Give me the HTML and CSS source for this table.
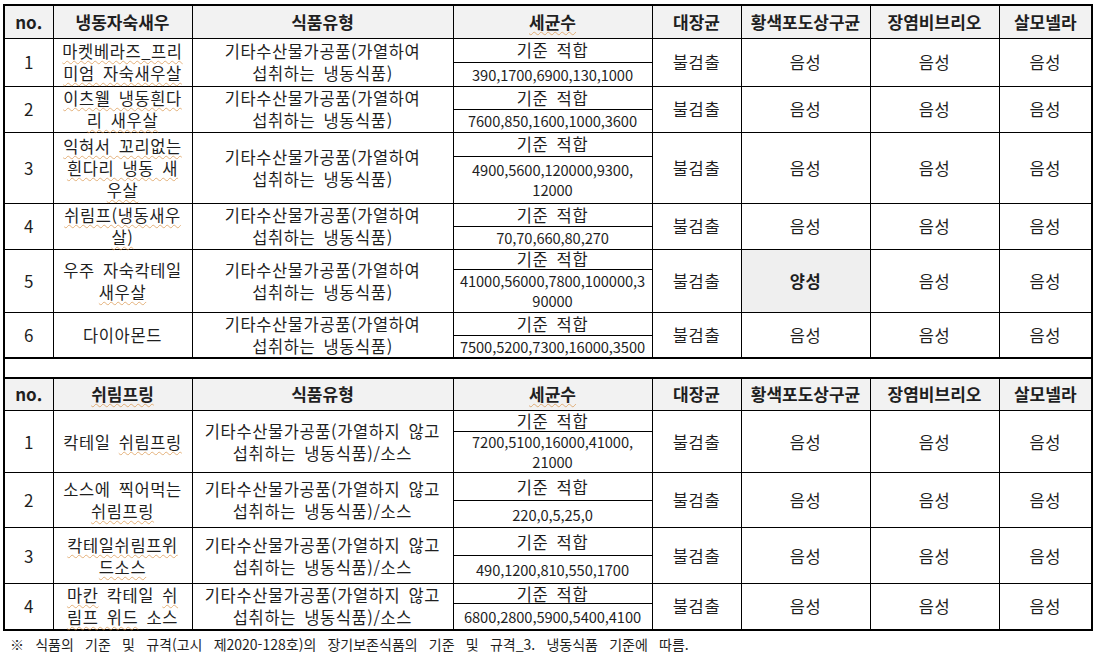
FILE: index.html
```html
<!DOCTYPE html>
<html lang="ko">
<head>
<meta charset="utf-8">
<title>냉동식품 검사 결과</title>
<link rel="stylesheet" href="styles.css">
</head>
<body>
<table class="grid">
  <colgroup>
    <col class="c-no"><col class="c-name"><col class="c-type"><col class="c-bac">
    <col class="c-ecoli"><col class="c-staph"><col class="c-vib"><col class="c-sal">
  </colgroup>
  <tr class="head">
    <th>no.</th><th>냉동자숙새우</th><th>식품유형</th><th><span class="sp">세균수</span></th>
    <th>대장균</th><th>황색포도상구균</th><th>장염비브리오</th><th>살모넬라</th>
  </tr>

  <tr class="h24">
    <td rowspan="2" class="no">1</td>
    <td rowspan="2"><span class="sp">마켓베라즈_프리</span><br><span class="sp">미엄 자숙새우살</span></td>
    <td rowspan="2">기타수산물가공품(가열하여<br>섭취하는 냉동식품)</td>
    <td class="sub">기준 적합</td>
    <td rowspan="2">불검출</td><td rowspan="2">음성</td><td rowspan="2">음성</td><td rowspan="2">음성</td>
  </tr>
  <tr class="h24"><td class="sub num">390,1700,6900,130,1000</td></tr>

  <tr class="h23">
    <td rowspan="2" class="no">2</td>
    <td rowspan="2"><span class="sp">이츠웰 냉동흰다</span><br><span class="sp">리 새우살</span></td>
    <td rowspan="2">기타수산물가공품(가열하여<br>섭취하는 냉동식품)</td>
    <td class="sub">기준 적합</td>
    <td rowspan="2">불검출</td><td rowspan="2">음성</td><td rowspan="2">음성</td><td rowspan="2">음성</td>
  </tr>
  <tr class="h23"><td class="sub num">7600,850,1600,1000,3600</td></tr>

  <tr class="h24">
    <td rowspan="2" class="no">3</td>
    <td rowspan="2"><span class="sp">익혀서 꼬리없는</span><br><span class="sp">흰다리 냉동 새</span><br><span class="sp">우살</span></td>
    <td rowspan="2">기타수산물가공품(가열하여<br>섭취하는 냉동식품)</td>
    <td class="sub">기준 적합</td>
    <td rowspan="2">불검출</td><td rowspan="2">음성</td><td rowspan="2">음성</td><td rowspan="2">음성</td>
  </tr>
  <tr class="h47"><td class="sub num num2">4900,5600,120000,9300,<br>12000</td></tr>

  <tr class="h23">
    <td rowspan="2" class="no">4</td>
    <td rowspan="2"><span class="sp">쉬림프(냉동새우</span><br><span class="sp">살)</span></td>
    <td rowspan="2">기타수산물가공품(가열하여<br>섭취하는 냉동식품)</td>
    <td class="sub">기준 적합</td>
    <td rowspan="2">불검출</td><td rowspan="2">음성</td><td rowspan="2">음성</td><td rowspan="2">음성</td>
  </tr>
  <tr class="h23"><td class="sub num">70,70,660,80,270</td></tr>

  <tr class="h20">
    <td rowspan="2" class="no">5</td>
    <td rowspan="2">우주 자숙칵테일<br><span class="sp">새우살</span></td>
    <td rowspan="2">기타수산물가공품(가열하여<br>섭취하는 냉동식품)</td>
    <td class="sub">기준 적합</td>
    <td rowspan="2">불검출</td><td rowspan="2" class="pos">양성</td><td rowspan="2">음성</td><td rowspan="2">음성</td>
  </tr>
  <tr class="h43"><td class="sub num num2">41000,56000,7800,100000,3<br>90000</td></tr>

  <tr class="h23">
    <td rowspan="2" class="no">6</td>
    <td rowspan="2">다이아몬드</td>
    <td rowspan="2">기타수산물가공품(가열하여<br>섭취하는 냉동식품)</td>
    <td class="sub">기준 적합</td>
    <td rowspan="2">불검출</td><td rowspan="2">음성</td><td rowspan="2">음성</td><td rowspan="2">음성</td>
  </tr>
  <tr class="h22"><td class="sub num">7500,5200,7300,16000,3500</td></tr>

  <tr class="gap"><td colspan="8"></td></tr>

  <tr class="head head2">
    <th>no.</th><th><span class="sp">쉬림프링</span></th><th>식품유형</th><th><span class="sp">세균수</span></th>
    <th>대장균</th><th>황색포도상구균</th><th>장염비브리오</th><th>살모넬라</th>
  </tr>

  <tr class="h21">
    <td rowspan="2" class="no">1</td>
    <td rowspan="2">칵테일 <span class="sp">쉬림프링</span></td>
    <td rowspan="2">기타수산물가공품(가열하지 않고<br>섭취하는 냉동식품)/소스</td>
    <td class="sub">기준 적합</td>
    <td rowspan="2">불검출</td><td rowspan="2">음성</td><td rowspan="2">음성</td><td rowspan="2">음성</td>
  </tr>
  <tr class="h41"><td class="sub num num2">7200,5100,16000,41000,<br>21000</td></tr>

  <tr class="h28">
    <td rowspan="2" class="no">2</td>
    <td rowspan="2">소스에 찍어먹는<br><span class="sp">쉬림프링</span></td>
    <td rowspan="2">기타수산물가공품(가열하지 않고<br>섭취하는 냉동식품)/소스</td>
    <td class="sub">기준 적합</td>
    <td rowspan="2">불검출</td><td rowspan="2">음성</td><td rowspan="2">음성</td><td rowspan="2">음성</td>
  </tr>
  <tr class="h27"><td class="sub num">220,0,5,25,0</td></tr>

  <tr class="h28">
    <td rowspan="2" class="no">3</td>
    <td rowspan="2"><span class="sp">칵테일쉬림프위</span><br><span class="sp">드소스</span></td>
    <td rowspan="2">기타수산물가공품(가열하지 않고<br>섭취하는 냉동식품)/소스</td>
    <td class="sub">기준 적합</td>
    <td rowspan="2">불검출</td><td rowspan="2">음성</td><td rowspan="2">음성</td><td rowspan="2">음성</td>
  </tr>
  <tr class="h28"><td class="sub num">490,1200,810,550,1700</td></tr>

  <tr class="h20">
    <td rowspan="2" class="no">4</td>
    <td rowspan="2"><span class="sp">마칸</span> 칵테일 <span class="sp">쉬</span><br><span class="sp">림프 위드</span> 소스</td>
    <td rowspan="2">기타수산물가공품(가열하지 않고<br>섭취하는 냉동식품)/소스</td>
    <td class="sub">기준 적합</td>
    <td rowspan="2">불검출</td><td rowspan="2">음성</td><td rowspan="2">음성</td><td rowspan="2">음성</td>
  </tr>
  <tr class="h26"><td class="sub num">6800,2800,5900,5400,4100</td></tr>
</table>
<p class="note">※ 식품의 기준 및 규격(고시 제2020-128호)의 장기보존식품의 기준 및 규격_3. 냉동식품 기준에 따름.</p>
</body>
</html>
```

FILE: styles.css
```css
html, body {
  margin: 0;
  padding: 0;
  background: #ffffff;
}

body {
  font-family: "Noto Sans CJK KR", "Noto Sans", sans-serif;
  color: #1f1f1f;
}

.grid {
  border-collapse: collapse;
  table-layout: fixed;
  width: 1090px;
  margin: 4px 0 0 3px;
  border: 2px solid #000;
  font-size: 16.5px;
  line-height: 22px;
  letter-spacing: 0.6px;
  word-spacing: 3px;
}

.c-no { width: 49px; }
.c-name { width: 139px; }
.c-type { width: 261px; }
.c-bac { width: 199px; }
.c-ecoli { width: 89px; }
.c-staph { width: 129px; }
.c-vib { width: 129px; }
.c-sal { width: 93px; }

.grid th,
.grid td {
  border: 1px solid #000;
  padding: 0;
  text-align: center;
  vertical-align: middle;
  white-space: nowrap;
}

.head {
  height: 33px;
}

.head th {
  background: #f2f2f2;
  font-weight: 700;
  font-size: 17px;
  line-height: 20px;
  letter-spacing: 0;
  word-spacing: 0;
}

.head2 th {
  border-top: 2px solid #000;
}

.gap {
  height: 20px;
}

.gap td {
  border-top: 2px solid #000;
  border-bottom: 2px solid #000;
}

.no {
  font-size: 17px;
  letter-spacing: 0;
}

.sub {
  line-height: 18px;
}

.num {
  font-size: 14.7px;
  line-height: 19px;
  letter-spacing: -0.1px;
  word-spacing: 0;
}

.num2 {
  line-height: 20px;
}

.pos {
  background: #efefef;
  font-weight: 700;
}

.sp {
  text-decoration: underline wavy rgba(215, 140, 60, 0.65);
  text-decoration-thickness: 1px;
  text-underline-offset: 2px;
}

.h20 { height: 20px; }
.h21 { height: 21px; }
.h22 { height: 22px; }
.h23 { height: 23px; }
.h24 { height: 24px; }
.h26 { height: 26px; }
.h27 { height: 27px; }
.h28 { height: 28px; }
.h41 { height: 41px; }
.h43 { height: 43px; }
.h47 { height: 47px; }

.note {
  margin: 3px 0 0 10px;
  font-size: 14px;
  line-height: 20px;
  word-spacing: 7.3px;
  color: #1f1f1f;
}
```
